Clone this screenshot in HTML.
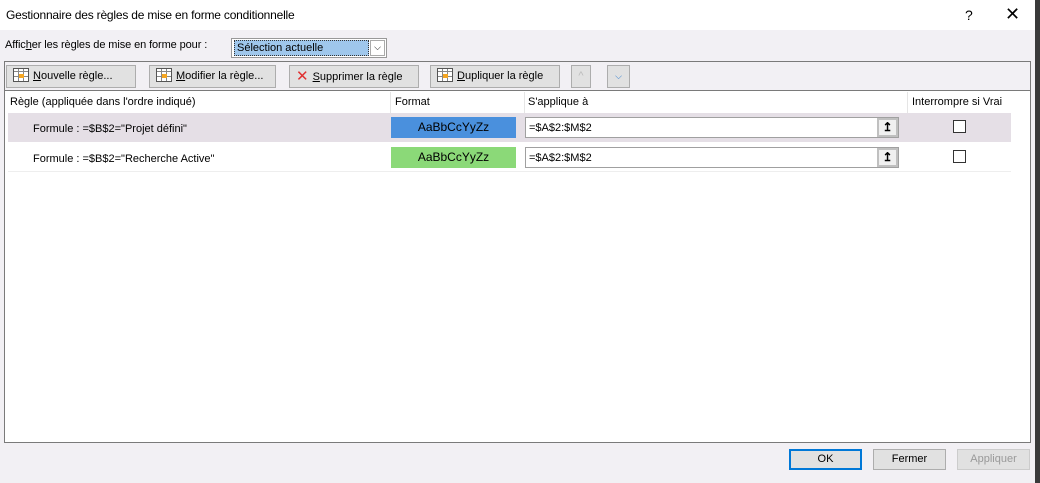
<!DOCTYPE html>
<html><head><style>
*{box-sizing:border-box;margin:0;padding:0}
body{width:1040px;height:483px;overflow:hidden;background:#f2f0f4;font-family:"Liberation Sans",sans-serif;font-size:11px;color:#000;position:relative}
.a{position:absolute}
.btn{position:absolute;top:65px;height:23px;background:#e1e1e1;border:1px solid #adadad;font-size:11px;line-height:21px;padding-left:6px;white-space:nowrap}
.ic{display:inline-block;width:16px;height:14px;vertical-align:-3px;margin-right:4px;border:1px solid #555;background:linear-gradient(#f5a623,#f5a623) 5px 5px/5px 4px no-repeat,repeating-linear-gradient(90deg,transparent 0 4px,#888 4px 5px),repeating-linear-gradient(0deg,transparent 0 4px,#888 4px 5px),#fff}
.row{position:absolute;left:8px;width:1003px;height:29px}
.fmt{position:absolute;width:125px;height:21px;top:4px;text-align:center;line-height:21px;font-size:12px}
.ap{position:absolute;width:374px;height:21px;top:4px;background:#fff;border:1px solid #a0a0a0;line-height:20px;padding-left:3px}
.up{position:absolute;right:0;top:0;width:21px;height:19px;border:2px solid #c0c0c0;background:#f0f0f0;text-align:center;font-weight:bold;line-height:15px;font-size:12px}
.cb{position:absolute;top:7px;width:13px;height:13px;border:1px solid #333;background:#fff}
.b2{position:absolute;top:449px;height:21px;background:#e1e1e1;border:1px solid #adadad;text-align:center;line-height:19px;font-size:11px}
</style></head><body>
<div class="a" style="left:1035px;top:0;width:5px;height:483px;background:#3a3a3a"></div>
<div class="a" style="left:0;top:0;width:1035px;height:30px;background:#fff"></div>
<div class="a" style="left:6px;top:8px;font-size:12px;letter-spacing:-0.2px">Gestionnaire des règles de mise en forme conditionnelle</div>
<div class="a" style="left:965px;top:7px;font-size:14px">?</div>
<div class="a" style="left:1005px;top:4px;font-size:18px;font-weight:300">✕</div>
<div class="a" style="left:5px;top:39px;letter-spacing:-0.1px">Affic<u>h</u>er les règles de mise en forme pour :</div>
<div class="a" style="left:231px;top:38px;width:156px;height:20px;border:1px solid #999;background:#fff"><div style="position:absolute;left:2px;top:1px;width:135px;height:16px;background:#9fc7ec;border:1px dotted #333;padding-left:2px;line-height:14px">Sélection actuelle</div><div style="position:absolute;right:1px;top:1px;width:15px;height:16px;border:1px solid #aaa;text-align:center;line-height:13px;font-size:9px">⌵</div></div>
<div class="a" style="left:4px;top:61px;width:1027px;height:382px;border:1px solid #7a7a7a;background:#f2f0f4"></div>
<div class="a" style="left:5px;top:90px;width:1025px;height:352px;background:#fff;border-top:1px solid #7a7a7a"></div>
<div class="btn" style="left:6px;width:130px"><span class="ic"></span><u>N</u>ouvelle règle...</div>
<div class="btn" style="left:149px;width:127px"><span class="ic"></span><u>M</u>odifier la règle...</div>
<div class="btn" style="left:289px;width:130px"><span style="color:#e03030;font-size:15px;margin-right:4px;vertical-align:-1px">✕</span><u>S</u>upprimer la règle</div>
<div class="btn" style="left:430px;width:130px"><span class="ic"></span><u>D</u>upliquer la règle</div>
<div class="btn" style="left:571px;width:20px;text-align:center;padding:0;color:#bbb">^</div>
<div class="btn" style="left:607px;width:23px;text-align:center;padding:0;color:#2a7ad0;font-size:9px">⌵</div>
<div class="a" style="left:10px;top:96px">Règle (appliquée dans l'ordre indiqué)</div>
<div class="a" style="left:390px;top:92px;width:1px;height:21px;background:#e5e5e5"></div>
<div class="a" style="left:395px;top:96px">Format</div>
<div class="a" style="left:524px;top:92px;width:1px;height:21px;background:#e5e5e5"></div>
<div class="a" style="left:528px;top:96px">S'applique à</div>
<div class="a" style="left:907px;top:92px;width:1px;height:21px;background:#e5e5e5"></div>
<div class="a" style="left:912px;top:96px">Interrompre si Vrai</div>
<div class="row" style="top:113px;background:#e5dfe6"><div class="a" style="left:25px;top:10px">Formule : =$B$2="Projet défini"</div><div class="fmt" style="left:383px;background:#4a90dd">AaBbCcYyZz</div><div class="ap" style="left:517px">=$A$2:$M$2<div class="up">↥</div></div><div class="cb" style="left:945px"></div></div>
<div class="row" style="top:143px;border-bottom:1px solid #eee"><div class="a" style="left:25px;top:10px">Formule : =$B$2="Recherche Active"</div><div class="fmt" style="left:383px;background:#8bd978">AaBbCcYyZz</div><div class="ap" style="left:517px">=$A$2:$M$2<div class="up">↥</div></div><div class="cb" style="left:945px"></div></div>
<div class="b2" style="left:789px;width:73px;border:2px solid #0078d7;line-height:17px">OK</div>
<div class="b2" style="left:873px;width:73px">Fermer</div>
<div class="b2" style="left:957px;width:73px;color:#999;border-color:#ccc">Appliquer</div>
</body></html>
